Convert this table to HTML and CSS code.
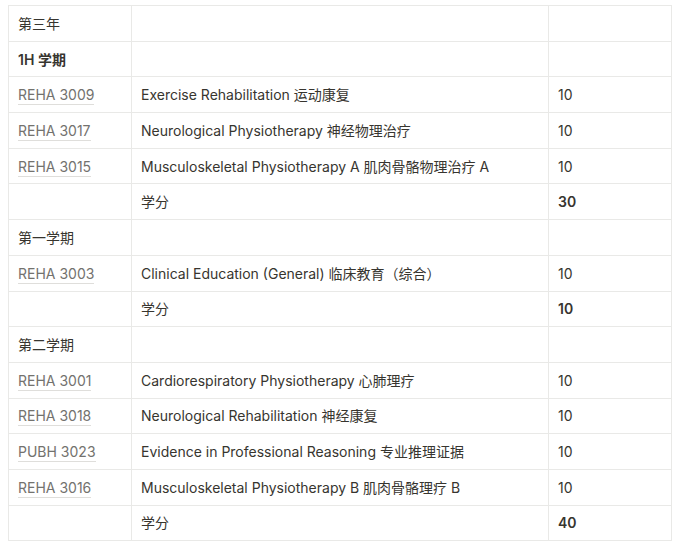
FILE: index.html
```html
<!DOCTYPE html>
<html lang="zh">
<head>
<meta charset="utf-8">
<link rel="stylesheet" href="styles.css">
</head>
<body>
<table class="grid">
  <colgroup><col class="c1"><col class="c2"><col class="c3"></colgroup>
  <tbody>
    <tr><td>第三年</td><td></td><td></td></tr>
    <tr><td class="b">1H 学期</td><td></td><td></td></tr>
    <tr><td><a class="code">REHA 3009</a></td><td>Exercise Rehabilitation 运动康复</td><td>10</td></tr>
    <tr><td><a class="code">REHA 3017</a></td><td>Neurological Physiotherapy 神经物理治疗</td><td>10</td></tr>
    <tr><td><a class="code">REHA 3015</a></td><td>Musculoskeletal Physiotherapy A 肌肉骨骼物理治疗 A</td><td>10</td></tr>
    <tr><td></td><td>学分</td><td class="b">30</td></tr>
    <tr><td>第一学期</td><td></td><td></td></tr>
    <tr><td><a class="code">REHA 3003</a></td><td>Clinical Education (General) 临床教育（综合）</td><td>10</td></tr>
    <tr><td></td><td>学分</td><td class="b">10</td></tr>
    <tr><td>第二学期</td><td></td><td></td></tr>
    <tr><td><a class="code">REHA 3001</a></td><td>Cardiorespiratory Physiotherapy 心肺理疗</td><td>10</td></tr>
    <tr><td><a class="code">REHA 3018</a></td><td>Neurological Rehabilitation 神经康复</td><td>10</td></tr>
    <tr><td><a class="code">PUBH 3023</a></td><td>Evidence in Professional Reasoning 专业推理证据</td><td>10</td></tr>
    <tr><td><a class="code">REHA 3016</a></td><td>Musculoskeletal Physiotherapy B 肌肉骨骼理疗 B</td><td>10</td></tr>
    <tr><td></td><td>学分</td><td class="b">40</td></tr>
  </tbody>
</table>
</body>
</html>
```
FILE: styles.css
```css
html, body {
  margin: 0;
  padding: 0;
  background: #ffffff;
}
body {
  padding: 5px 0 0 8px;
  font-family: Inter, "Noto Sans CJK SC", sans-serif;
  font-size: 14px;
  color: #37352f;
}
.grid {
  border-collapse: collapse;
  table-layout: fixed;
  width: 663px;
}
.c1 { width: 123px; }
.c2 { width: 417px; }
.c3 { width: 123px; }
.grid td {
  border: 1px solid #e9e9e7;
  height: 35.7px;
  box-sizing: border-box;
  padding: 1px 9px 0 9px;
  vertical-align: middle;
  white-space: nowrap;
  line-height: 20px;
}
.b { font-weight: 600; }
.code {
  color: #73726e;
  text-decoration: none;
  border-bottom: 1px solid #dfdedb;
  padding-bottom: 1px;
}
```
